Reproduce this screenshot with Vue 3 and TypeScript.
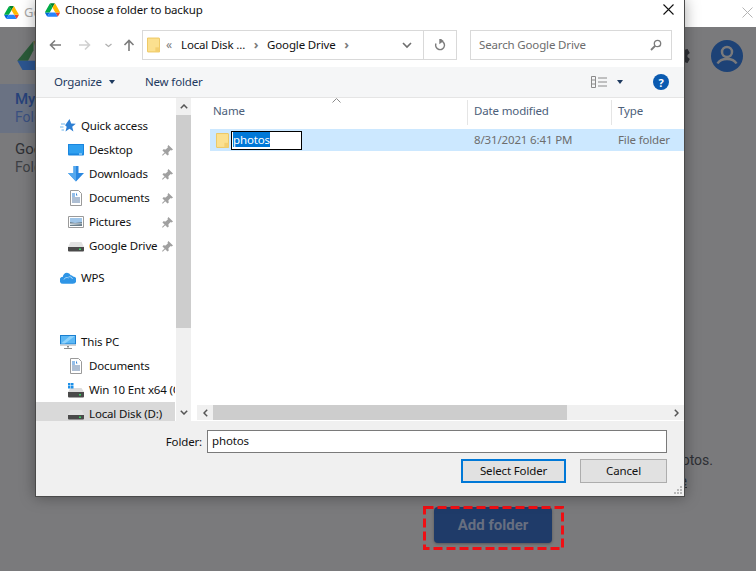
<script setup lang="ts">
interface NavRow {
  label: string
  icon: string
  level: number
  gap: number
  pinned?: boolean
  active?: boolean
}

const navRows: NavRow[] = [
  { label: 'Quick access', icon: 'star', level: 0, gap: 16 },
  { label: 'Desktop', icon: 'desktop', level: 1, gap: 0, pinned: true },
  { label: 'Downloads', icon: 'download', level: 1, gap: 0, pinned: true },
  { label: 'Documents', icon: 'doc', level: 1, gap: 0, pinned: true },
  { label: 'Pictures', icon: 'picture', level: 1, gap: 0, pinned: true },
  { label: 'Google Drive', icon: 'disk', level: 1, gap: 0, pinned: true },
  { label: 'WPS', icon: 'cloud', level: 0, gap: 8 },
  { label: 'This PC', icon: 'pc', level: 0, gap: 40 },
  { label: 'Documents', icon: 'doc', level: 1, gap: 0 },
  { label: 'Win 10 Ent x64 (C:)', icon: 'windisk', level: 1, gap: 0 },
  { label: 'Local Disk (D:)', icon: 'disk', level: 1, gap: 0, active: true },
]
</script>

<template>
  <div class="screen">
    <svg class="sprite" aria-hidden="true">
      <symbol id="drive" viewBox="0 0 87.3 78">
        <path d="m6.6 66.85 3.85 6.65c.8 1.4 1.95 2.5 3.3 3.3l13.75-23.8h-27.5c0 1.55.4 3.1 1.2 4.5z" fill="#0066da" />
        <path d="m43.65 25-13.75-23.8c-1.35.8-2.5 1.9-3.3 3.3l-25.4 44a9.06 9.06 0 0 0 -1.2 4.5h27.5z" fill="#00ac47" />
        <path d="m73.55 76.8c1.35-.8 2.5-1.9 3.3-3.3l1.6-2.75 7.65-13.25c.8-1.4 1.2-2.95 1.2-4.5h-27.502l5.852 11.5z" fill="#ea4335" />
        <path d="m43.65 25 13.75-23.8c-1.35-.8-2.9-1.2-4.5-1.2h-18.5c-1.6 0-3.15.45-4.5 1.2z" fill="#00832d" />
        <path d="m59.8 53h-32.3l-13.75 23.8c1.35.8 2.9 1.2 4.5 1.2h50.8c1.6 0 3.15-.45 4.5-1.2z" fill="#2684fc" />
        <path d="m73.4 26.5-12.7-22c-.8-1.4-1.95-2.5-3.3-3.3l-13.75 23.8 16.15 28h27.45c0-1.55-.4-3.1-1.2-4.5z" fill="#ffba00" />
      </symbol>
      <symbol id="folder" viewBox="0 0 14 16">
        <path d="M.5.5h12.4a.6.6 0 0 1 .6.6v14.4H1a.5.5 0 0 1-.5-.5z" fill="#fbe08f" stroke="#edc55c" />
        <path d="M9 10.5h4.5v5H9z" fill="#f3cf70" />
      </symbol>
      <symbol id="star" viewBox="0 0 16 16">
        <path d="M9.5 1l1.700 4.400 4.600.3-3.600 3 1.200 4.700-3.900-2.600-4 2.600 1.200-4.700-1.600-1.400z" fill="#2d7fd3" />
        <path d="M1 6h4M0 9h3.500M1.500 12H4" stroke="#6fb6ee" />
      </symbol>
      <symbol id="desktop" viewBox="0 0 16 13">
        <path d="M0 .5h16V11a1 1 0 0 1-1 1H1a1 1 0 0 1-1-1z" fill="#1a86df" />
        <path d="M1 1.500h14V10H1z" fill="#2fa0f0" />
        <path d="M11 10h3v1h-3z" fill="#cdeafd" />
      </symbol>
      <symbol id="download" viewBox="0 0 16 16">
        <path d="M5.500 0h5v7H16l-8 8.500L0 7h5.500z" fill="#2a87e0" />
        <path d="M5.500 0h2.500v15.500L0 7h5.500z" fill="#56a9ee" />
      </symbol>
      <symbol id="doc" viewBox="0 0 12 16">
        <path d="M.5.5h8l3 3v12H.5z" fill="#fff" stroke="#9a9a9a" />
        <path d="M2 4h3M2 6h3" stroke="#2d7fd3" />
        <path d="M6 2.500l1.500 3H6z" fill="#2d7fd3" />
        <path d="M2 8h8M2 10h8M2 12h8" stroke="#5d7fa8" />
      </symbol>
      <symbol id="picture" viewBox="0 0 16 12">
        <path d="M.5.5h15v11H.5z" fill="#fff" stroke="#9a9a9a" />
        <path d="M2 2h12v8H2z" fill="#9fc5e8" />
        <path d="M2 6l5 1 7-1v4H2z" fill="#6b7f8c" />
        <path d="M2 7.500h12V8l-12 1z" fill="#dfe6ea" />
      </symbol>
      <symbol id="disk" viewBox="0 0 16 12">
        <path d="M2.500 2h11L16 7H0z" fill="#e2e2e2" />
        <path d="M0 7h16v3.500a1 1 0 0 1-1 1H1a1 1 0 0 1-1-1z" fill="#4a4a4a" />
        <path d="M11 8.500h2V10h-2z" fill="#38d163" />
      </symbol>
      <symbol id="windisk" viewBox="0 0 16 16">
        <path d="M2.500 6h11L16 10H0z" fill="#dcdcdc" />
        <path d="M0 10h16v4.500a1 1 0 0 1-1 1H1a1 1 0 0 1-1-1z" fill="#4a4a4a" />
        <path d="M11 12h2v1.500h-2z" fill="#38d163" />
        <path d="M0 1h2.500v2.500H0zM3 1h2.500v2.500H3zM0 4h2.500v2.500H0zM3 4h2.500v2.500H3z" fill="#1e90e8" />
      </symbol>
      <symbol id="cloud" viewBox="0 0 16 12">
        <path d="M3.500 11.800a3.500 3.500 0 0 1-.6-7A4 4 0 0 1 7 .8a4 4 0 0 1 3.700 2.500 3 3 0 0 1 2.300 1.200 3.600 3.600 0 0 1-.5 7.300z" fill="#2e95e6" />
        <path d="M4 7.500a3 3 0 0 1 4.500-1.500M8.500 5a3 3 0 0 1 4 2" stroke="#bfe2fb" fill="none" stroke-width=".8" />
      </symbol>
      <symbol id="pc" viewBox="0 0 16 15">
        <path d="M0 .5h16V10H0z" fill="#1a7fd0" />
        <path d="M1 1.500h14V9H1z" fill="#5cb8f5" />
        <path d="M1 9l9-7.500h5L5 9z" fill="#8fd2fb" />
        <path d="M0 10h16v1.500H0z" fill="#d3d3d3" />
        <path d="M7 11.500h2V13H7zM4 13.500h8v1H4z" fill="#8c8c8c" />
      </symbol>
      <symbol id="pin" viewBox="0 0 12 12">
        <path d="M7 0l5 5-1.500 1-1-.5L7 8l.3 2.500L6 11.500 3.500 9 .8 11.800 0 11l2.800-2.700L.5 6l1-1.300L4 5l2.500-2.500L6 1.500z" fill="#a0a0a0" />
      </symbol>
    </svg>

    <div class="app">
      <header class="app-tab">
        <svg class="app-tab-logo"><use href="#drive" /></svg>
        <span class="app-tab-title">Google Drive</span>
        <svg class="app-tab-close" viewBox="0 0 11 11"><path d="M.5.5l10 10M10.500.5l-10 10" stroke="#b4b4b4" /></svg>
      </header>
      <div class="app-head">
        <svg class="app-logo" viewBox="0 0 87.3 78">
          <path d="M43.650 0 0 53h29L43.650 25z" fill="#2a5a38" />
          <path d="M43.650 0h14L87 53H60z" fill="#6e6a3a" />
          <path d="M0 53h87l-13 25H14z" fill="#2c5590" />
        </svg>
        <svg class="app-gear" viewBox="0 0 24 24">
          <path fill="#2e3035" d="M19.430 12.980c.04-.32.07-.64.07-.98s-.03-.66-.07-.98l2.110-1.650c.19-.15.240-.42.120-.64l-2-3.460c-.12-.22-.39-.3-.61-.22l-2.490 1c-.52-.4-1.080-.73-1.690-.98l-.38-2.650A.49.490 0 0 0 14 2h-4c-.25 0-.46.180-.49.420l-.38 2.650c-.61.250-1.170.590-1.690.98l-2.490-1c-.23-.09-.49 0-.61.220l-2 3.460c-.13.220-.07.490.12.640l2.110 1.650c-.04.320-.07.650-.07.980s.03.660.07.980l-2.110 1.650c-.19.150-.24.420-.12.640l2 3.460c.12.220.39.300.61.220l2.490-1c.52.400 1.080.730 1.690.980l.38 2.650c.03.240.24.420.49.420h4c.25 0 .46-.180.49-.420l.38-2.650c.61-.250 1.170-.590 1.690-.980l2.490 1c.23.090.49 0 .61-.220l2-3.460c.12-.220.07-.490-.12-.640zM12 15.500a3.500 3.500 0 1 1 0-7 3.500 3.500 0 0 1 0 7z" />
        </svg>
        <svg class="app-avatar" viewBox="0 0 32 32">
          <circle cx="16" cy="16" r="16" fill="#1d4276" />
          <circle cx="16" cy="12" r="5" fill="none" stroke="#7a7a7c" stroke-width="2.500" />
          <path d="M6.500 23.500c2-3.500 6-4.500 9.500-4.500s7.500 1 9.500 4.500" fill="none" stroke="#7a7a7c" stroke-width="2.500" />
        </svg>
      </div>
      <div class="app-body">
        <aside class="app-side">
          <div class="app-side-item is-active">
            <div class="app-side-name">My Computer</div>
            <div class="app-side-sub">Folders from your computer</div>
          </div>
          <div class="app-side-item">
            <div class="app-side-name">Google Drive</div>
            <div class="app-side-sub">Folders from Drive</div>
          </div>
        </aside>
        <main class="app-main">
          <p class="app-text">Back up your files and folders, including all your photos.</p>
          <p class="app-text">Files will be synced to Drive. <u>Learn more</u></p>
          <button class="add-btn">Add folder</button>
        </main>
      </div>
    </div>

    <svg class="callout" viewBox="0 0 141 44"><rect x="1.500" y="1.500" width="138" height="41" fill="none" stroke="#f00f14" stroke-width="3" stroke-dasharray="9 4" /></svg>

    <section class="dialog">
      <div class="title-bar">
        <svg class="title-logo"><use href="#drive" /></svg>
        <span class="title-text">Choose a folder to backup</span>
        <svg class="title-close" viewBox="0 0 11 11"><path d="M.5.500l10 10M10.500.500l-10 10" stroke="#111" stroke-width="1.100" /></svg>
      </div>

      <div class="nav-bar">
        <svg class="nav-arrow" viewBox="0 0 12 12"><path d="M12 6H1.500M6 1.500 1.500 6 6 10.500" fill="none" stroke="#7c7c7c" stroke-width="1.600" /></svg>
        <svg class="nav-arrow is-off" viewBox="0 0 12 12"><path d="M0 6h10.500M6 1.500 10.500 6 6 10.500" fill="none" stroke="#d0d0d0" stroke-width="1.600" /></svg>
        <svg class="nav-drop" viewBox="0 0 7 5"><path d="M.5 1l3 2.500L6.500 1" fill="none" stroke="#b0b0b0" stroke-width="1.300" /></svg>
        <svg class="nav-arrow is-up" viewBox="0 0 12 12"><path d="M6 12V1.500M1.500 6 6 1.500 10.500 6" fill="none" stroke="#7c7c7c" stroke-width="1.600" /></svg>

        <div class="crumb-box">
          <svg class="crumb-folder"><use href="#folder" /></svg>
          <span class="crumb-more">«</span>
          <span class="crumb">Local Disk ...</span>
          <span class="crumb-sep">›</span>
          <span class="crumb">Google Drive</span>
          <span class="crumb-sep">›</span>
          <span class="crumb-fill"></span>
          <span class="crumb-drop">
            <svg viewBox="0 0 10 7" width="10" height="7"><path d="M1 1l4 4 4-4" fill="none" stroke="#6e6e6e" stroke-width="1.600" /></svg>
          </span>
          <span class="crumb-refresh">
            <svg viewBox="0 0 12 12" width="12" height="12"><path d="M6 1.800a4.400 4.400 0 1 1-4 2.700M6 0v3.800L8.500 1.900z" fill="none" stroke="#7c7c7c" stroke-width="1.400" /></svg>
          </span>
        </div>

        <div class="search-box">
          <span class="search-text">Search Google Drive</span>
          <svg viewBox="0 0 12 12" width="12" height="12"><circle cx="7.500" cy="4.500" r="3.200" fill="none" stroke="#7c7c7c" stroke-width="1.300" /><path d="M5 7 1 11" stroke="#7c7c7c" stroke-width="1.800" /></svg>
        </div>
      </div>

      <div class="tool-bar">
        <span class="tool-link">Organize</span>
        <i class="caret is-organize"></i>
        <span class="tool-link is-new">New folder</span>
        <span class="tool-fill"></span>
        <svg class="view-icon" viewBox="0 0 16 12"><path d="M.5.500h4v11h-4zM.5 4h4M.500 8h4M7 2h9M7 6h9M7 10h9" fill="none" stroke="#8a8a8a" /></svg>
        <i class="caret is-view"></i>
        <span class="help">?</span>
      </div>

      <div class="panes">
        <nav class="tree">
          <div
            v-for="(row, i) in navRows"
            :key="i"
            class="tree-row"
            :class="{ 'is-active': row.active, 'is-child': row.level === 1 }"
            :style="{ marginTop: row.gap + 'px' }"
          >
            <span class="tree-icon"><svg><use :href="'#' + row.icon" /></svg></span>
            <span class="tree-label" :class="{ 'has-pin': row.pinned }">{{ row.label }}</span>
            <svg v-if="row.pinned" class="tree-pin"><use href="#pin" /></svg>
          </div>
        </nav>

        <div class="v-scroll">
          <span class="sb-btn is-top"><svg viewBox="0 0 8 5" width="8" height="5"><path d="M.8 4.200 4 1l3.200 3.200" fill="none" stroke="#555" stroke-width="1.500" /></svg></span>
          <span class="v-thumb"></span>
          <span class="sb-fill"></span>
          <span class="sb-btn"><svg viewBox="0 0 8 5" width="8" height="5"><path d="M.8.800 4 4 7.200.800" fill="none" stroke="#555" stroke-width="1.500" /></svg></span>
        </div>

        <div class="files">
          <svg class="sort-mark" viewBox="0 0 9 5"><path d="M.5 4.500l4-4 4 4" fill="none" stroke="#8a8a8a" /></svg>
          <div class="file-head">
            <span class="col-name">Name</span>
            <span class="col-date">Date modified</span>
            <span class="col-type">Type</span>
          </div>
          <div class="file-row">
            <span class="col-name file-name">
              <svg class="file-icon"><use href="#folder" /></svg>
              <span class="rename"><span class="rename-sel">photos</span></span>
            </span>
            <span class="col-date file-meta">8/31/2021 6:41 PM</span>
            <span class="col-type file-meta">File folder</span>
          </div>
          <div class="files-fill"></div>
          <div class="h-scroll">
            <span class="sb-btn is-h"><svg viewBox="0 0 5 8" width="5" height="8"><path d="M4.200.800 1 4l3.200 3.200" fill="none" stroke="#555" stroke-width="1.500" /></svg></span>
            <span class="h-thumb"></span>
            <span class="sb-fill"></span>
            <span class="sb-btn is-h"><svg viewBox="0 0 5 8" width="5" height="8"><path d="M.8.800 4 4 .8 7.200" fill="none" stroke="#555" stroke-width="1.500" /></svg></span>
          </div>
        </div>
      </div>

      <footer class="foot">
        <div class="foot-field">
          <label class="foot-label">Folder:</label>
          <div class="foot-input">photos</div>
        </div>
        <div class="foot-actions">
          <button class="win-btn is-default">Select Folder</button>
          <button class="win-btn is-cancel">Cancel</button>
        </div>
        <svg class="grip" viewBox="0 0 8 8"><path d="M6 0h2v2H6zM3 3h2v2H3zM6 3h2v2H6zM0 6h2v2H0zM3 6h2v2H3zM6 6h2v2H6z" fill="#b8b8b8" /></svg>
      </footer>
    </section>
  </div>
</template>

<style scoped>
.screen {
  position: relative;
  width: 756px;
  height: 571px;
  overflow: hidden;
  background: #7a7a7c;
  font-family: "Noto Sans", "Open Sans", sans-serif;
  font-size: 11.5px;
  letter-spacing: -0.15px;
  color: #111;
}
.sprite { display: none; }
button { font-family: inherit; letter-spacing: inherit; }

/* background application */
.app { display: flex; flex-direction: column; height: 571px; letter-spacing: 0; }
.app-tab { display: flex; align-items: center; height: 27px; padding: 0 3px 3px 4px; background: #fff; box-sizing: border-box; }
.app-tab-logo { width: 15px; height: 13px; }
.app-tab-title { margin-left: 5px; color: #a8a8a8; font-size: 13px; flex: 1; }
.app-tab-close { width: 11px; height: 11px; }
.app-head { display: flex; align-items: center; height: 57px; padding: 0 13px 0 17px; }
.app-logo { width: 33px; height: 29px; }
.app-gear { width: 24px; height: 24px; margin-left: 618px; }
.app-avatar { width: 32px; height: 32px; margin-left: 19px; }
.app-body { display: flex; flex: 1; }
.app-side { width: 200px; }
.app-side-item { height: 49px; padding: 6px 0 0 15px; box-sizing: border-box; white-space: nowrap; margin-bottom: 1px; }
.app-side-item.is-active { background: #6a7283; }
.app-side-name { font-size: 15px; line-height: 18px; color: #2e3035; font-family: Roboto, sans-serif; }
.app-side-sub { font-size: 14px; line-height: 19px; color: #3d3f44; font-family: Roboto, sans-serif; }
.is-active .app-side-name { color: #27427a; font-weight: 500; }
.is-active .app-side-sub { color: #3a5080; }
.app-main { flex: 1; display: flex; flex-direction: column; align-items: center; padding: 366px 0 0 30px; box-sizing: border-box; }
.app-text { margin: 0; width: 440px; height: 21px; line-height: 21px; font-size: 14px; color: #2e3035; text-align: right; white-space: nowrap; font-family: Roboto, sans-serif; }
.app-text + .app-text { padding-right: 26px; box-sizing: border-box; }
.add-btn { width: 118px; height: 36px; margin-top: 15px; border: 0; border-radius: 4px; background: #1f3b69; color: #676f80; font-family: Roboto, sans-serif; font-size: 15px; letter-spacing: 0; font-weight: 700; box-shadow: 0 1px 3px rgba(0, 0, 0, .3); }

.callout { position: absolute; left: 423px; top: 506px; width: 141px; height: 44px; }

/* dialog */
.dialog {
  position: absolute;
  left: 35px;
  top: 0;
  width: 650px;
  height: 497px;
  box-sizing: border-box;
  display: flex;
  flex-direction: column;
  background: #fff;
  border: solid #4a4a4a;
  border-width: 0 1px 1px 1px;
  box-shadow: 0 0 14px rgba(0, 0, 0, .35);
}
.title-bar { display: flex; align-items: center; height: 27px; padding: 0 10px 7px 9px; box-sizing: border-box; flex: none; }
.title-logo { width: 15px; height: 14px; }
.title-text { margin-left: 5px; flex: 1; padding-bottom: 2px; }
.title-close { width: 11px; height: 11px; margin-bottom: 2px; }

.nav-bar { display: flex; align-items: center; height: 40px; flex: none; padding: 0 11px 4px 13px; box-sizing: border-box; }
.nav-arrow { width: 12px; height: 12px; flex: none; }
.nav-arrow.is-off { margin-left: 18px; }
.nav-drop { width: 7px; height: 5px; margin-left: 14px; flex: none; }
.nav-arrow.is-up { margin-left: 11px; }
.crumb-box { display: flex; align-items: center; width: 315px; height: 30px; margin-left: 7px; border: 1px solid #d9d9d9; box-sizing: border-box; flex: none; padding-left: 4px; }
.crumb-folder { width: 13px; height: 16px; flex: none; }
.crumb-more { margin-left: 6px; color: #7c7c7c; font-size: 12px; width: 15px; padding-bottom: 2px; }
.crumb { color: #111; white-space: nowrap; padding-bottom: 2px; }
.crumb-sep { margin: 0 8px; width: 6px; color: #7c7c7c; font-weight: 700; font-size: 13px; text-align: center; padding-bottom: 2px; }
.crumb-fill { flex: 1; }
.crumb-drop { display: flex; align-items: center; justify-content: center; width: 33px; height: 100%; border-right: 1px solid #d9d9d9; box-sizing: border-box; }
.crumb-refresh { display: flex; align-items: center; justify-content: center; width: 32px; height: 100%; }
.search-box { display: flex; align-items: center; width: 202px; height: 30px; margin-left: 13px; padding: 0 9px 0 8px; border: 1px solid #d9d9d9; box-sizing: border-box; flex: none; }
.search-text { flex: 1; color: #6d6d6d; white-space: nowrap; padding-bottom: 2px; }

.tool-bar { display: flex; align-items: center; height: 31px; flex: none; padding: 0 15px 0 18px; background: #f5f6f7; border-bottom: 1px solid #e5e5e5; box-sizing: border-box; color: #1e3a5f; }
.tool-link { white-space: nowrap; padding-bottom: 2px; }
.tool-link.is-new { margin-left: 30px; }
.tool-fill { flex: 1; }
.caret { display: block; border-style: solid; border-color: #1e3a5f transparent transparent; border-width: 4px 3.500px 0; }
.caret.is-organize { margin-left: 7px; }
.caret.is-view { margin-left: 10px; }
.view-icon { width: 16px; height: 12px; }
.help { display: flex; align-items: center; justify-content: center; width: 16px; height: 16px; margin-left: 30px; border-radius: 50%; background: #0a5ab0; color: #fff; font-weight: 700; font-size: 11px; }

.panes { display: flex; flex: 1; min-height: 0; }
.tree { width: 139px; flex: none; overflow: hidden; height: 323px; }
.tree-row { display: flex; align-items: center; height: 24px; padding-left: 24px; white-space: nowrap; }
.tree-row.is-child { padding-left: 32px; }
.tree-row.is-active { background: #d9d9d9; }
.tree-icon { display: flex; width: 16px; height: 16px; flex: none; align-items: center; }
.tree-icon svg { width: 16px; height: 16px; }
.tree-label { margin-left: 5px; flex: none; padding-bottom: 2px; }
.tree-label.has-pin { width: 73px; }
.tree-pin { width: 11px; height: 11px; flex: none; }

.v-scroll { width: 15px; height: 323px; flex: none; margin-left: 1px; display: flex; flex-direction: column; background: #f0f0f0; }
.sb-btn { display: flex; align-items: center; justify-content: center; width: 15px; height: 18px; flex: none; }
.sb-btn.is-top { height: 17px; }
.sb-btn.is-h { height: 15px; }
.sb-fill { flex: 1; }
.v-thumb { height: 213px; background: #cdcdcd; flex: none; }

.files { position: relative; flex: 1; min-width: 0; display: flex; flex-direction: column; margin-left: 4px; }
.sort-mark { position: absolute; left: 137px; top: 0; width: 9px; height: 5px; }
.file-head { display: flex; align-items: center; height: 26px; margin: 1px 0 4px 0; color: #4c607a; }
.file-head .col-name { padding-bottom: 3px; }
.col-name { width: 272px; padding-left: 18px; box-sizing: border-box; flex: none; }
.col-date { width: 144px; padding-left: 6px; box-sizing: border-box; border-left: 1px solid #e5e5e5; height: 25px; line-height: 21px; flex: none; }
.col-type { padding-left: 6px; border-left: 1px solid #e5e5e5; height: 25px; line-height: 21px; flex: 1; }
.file-row { display: flex; align-items: center; height: 22px; margin-left: 15px; background: #cce8ff; }
.file-row .col-name { width: 257px; padding-left: 6px; }
.file-name { display: flex; align-items: center; }
.file-icon { width: 13px; height: 15px; flex: none; }
.rename { display: block; width: 71px; height: 19px; margin-left: 2px; border: 1px solid #000; background: #fff; box-sizing: border-box; padding-left: 1px; line-height: 15px; }
.rename-sel { display: inline-block; background: #0078d7; color: #fff; }
.file-meta { border-left: 0; color: #6d6d6d; height: 22px; line-height: 21px; }
.file-row .col-date { padding-left: 7px; }
.file-row .col-type { padding-left: 7px; }
.files-fill { flex: 1; }
.h-scroll { display: flex; align-items: center; height: 15px; flex: none; background: #f0f0f0; margin: 0 0 1px 2px; }
.h-scroll .sb-btn { width: 16px; }
.h-thumb { width: 354px; height: 15px; background: #cdcdcd; flex: none; }

.foot { position: relative; height: 75px; flex: none; background: #f0f0f0; padding: 9px 17px 0 0; box-sizing: border-box; display: flex; flex-direction: column; align-items: flex-end; }
.foot-field { display: flex; align-items: center; }
.foot-label { margin-right: 5px; }
.foot-input { width: 460px; height: 23px; border: 1px solid #7a7a7a; background: #fff; box-sizing: border-box; padding-left: 4px; line-height: 20px; }
.foot-actions { display: flex; gap: 14px; margin-top: 6px; }
.win-btn { height: 24px; background: #e1e1e1; box-sizing: border-box; font-size: 11.5px; color: #111; padding: 0 0 2px; }
.win-btn.is-default { width: 105px; border: 2px solid #0078d7; }
.win-btn.is-cancel { width: 87px; border: 1px solid #adadad; }
.grip { position: absolute; right: 2px; bottom: 2px; width: 8px; height: 8px; }
</style>
